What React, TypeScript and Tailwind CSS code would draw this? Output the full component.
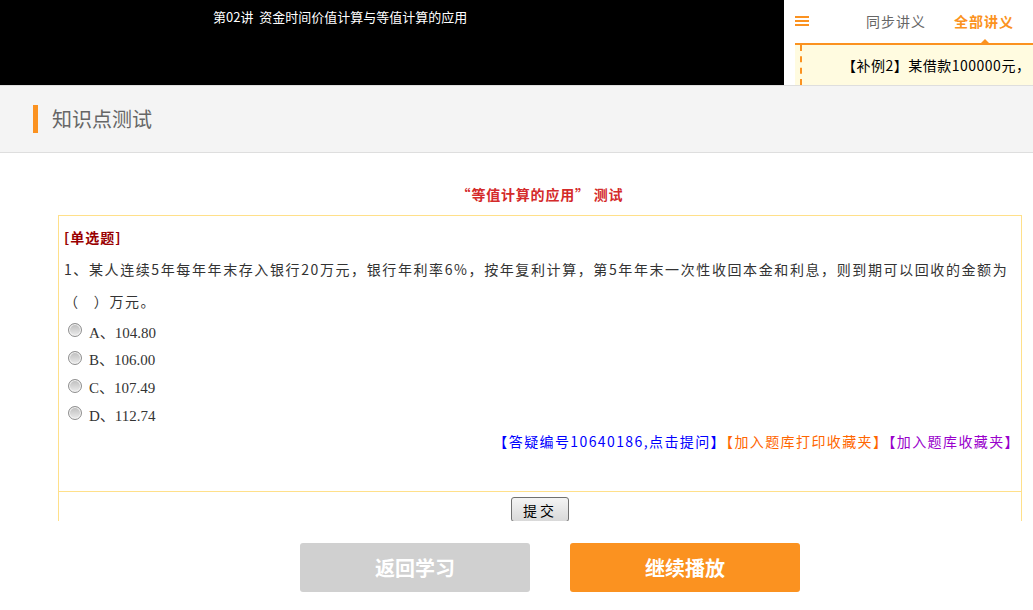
import React from 'react';

const sans = "font-['Microsoft_YaHei','Noto_Sans_CJK_SC',sans-serif]";

const options = [
  { key: 'A', value: '104.80' },
  { key: 'B', value: '106.00' },
  { key: 'C', value: '107.49' },
  { key: 'D', value: '112.74' },
];

function Radio() {
  return (
    <span className="inline-block w-[14px] h-[14px] rounded-full border border-[#8f8f8f] bg-gradient-to-b from-[#bdbdbd] to-[#ececec] shadow-[inset_0_0_0_1px_#f4f4f4]" />
  );
}

export default function App() {
  return (
    <div className={`w-[1033px] h-[610px] overflow-hidden bg-white flex flex-col ${sans}`}>
      {/* Video bar + outline panel */}
      <div className="h-[85px] flex shrink-0">
        <div className="w-[784px] shrink-0 bg-black pl-[213px] pt-[8px] text-[13px] leading-[17px] text-white">
          第02讲&nbsp;&nbsp;资金时间价值计算与等值计算的应用
        </div>
        <div className="flex-1 min-w-0 bg-white pl-[11px] flex flex-col">
          <div className="h-[45px] shrink-0 flex items-center border-b-2 border-[#fb9220] relative">
            <div className="flex flex-col gap-[2px] w-[14px] -mt-[1px]">
              <span className="h-[2px] bg-[#fb9220]" />
              <span className="h-[2px] bg-[#fb9220]" />
              <span className="h-[2px] bg-[#fb9220]" />
            </div>
            <span className="ml-[57px] text-[14px] text-[#666] tracking-[1px]">同步讲义</span>
            <span className="ml-[28px] text-[14px] font-bold text-[#fb9220] tracking-[1px]">全部讲义</span>
            <span className="absolute left-[186px] bottom-0 w-0 h-0 border-x-[4px] border-x-transparent border-b-[4px] border-b-[#fb9220]" />
          </div>
          <div className="flex-1 bg-[#fffbe0] flex items-center overflow-hidden">
            <span className="ml-[5px] h-full shrink-0 border-l-2 border-dashed border-[#fb9220]" />
            <span className="ml-[40px] whitespace-nowrap text-[14px] text-black tracking-[0.5px]">【补例2】某借款100000元，</span>
          </div>
        </div>
      </div>

      {/* Section header */}
      <div className="h-[68px] shrink-0 bg-[#f4f4f4] border-t border-b border-[#dedede] flex items-center pl-[33px]">
        <span className="w-[5px] h-[28px] bg-[#fb9220]" />
        <span className="ml-[14px] text-[20px] text-[#666]">知识点测试</span>
      </div>

      {/* Test content */}
      <div className="h-[368px] shrink-0 overflow-hidden pt-[31px]">
        <div className="ml-[58px] mr-[11px]">
          <div className="text-center text-[14px] leading-[20px] font-bold text-[#d42a2a] mb-[11px] tracking-[0.8px]">“等值计算的应用” 测试</div>
          <div className="border border-[#ffe08a]">
            <div className="pl-[5px] pr-[1px] pt-[11px] h-[275px]">
              <div className="text-[14px] leading-[20px] font-bold text-[#990000] tracking-[1px]">[单选题]</div>
              <div className="mt-[6px] text-[14px] leading-[32px] text-[#333] tracking-[1.6px]">
                1、某人连续5年每年年末存入银行20万元，银行年利率6%，按年复利计算，第5年年末一次性收回本金和利息，则到期可以回收的金额为<br />（&nbsp;&nbsp;&nbsp;）万元。
              </div>
              <div className="mt-[2px] flex flex-col">
                {options.map(o => (
                  <label key={o.key} className="h-[27.7px] flex items-center pl-[4px]">
                    <span className="-mt-[5px]"><Radio /></span>
                    <span className="ml-[7px] text-[15px] text-[#333] font-['Liberation_Serif','Noto_Sans_CJK_SC',serif]">{o.key}、{o.value}</span>
                  </label>
                ))}
              </div>
              <div className="mt-[1px] text-right text-[14px] leading-[20px] whitespace-nowrap tracking-[1.4px]">
                <span className="text-[#0000ff]">【答疑编号10640186,点击提问】</span>
                <span className="text-[#ff6600]">【加入题库打印收藏夹】</span>
                <span className="text-[#9900cc]">【加入题库收藏夹】</span>
              </div>
            </div>
            <div className="border-t border-[#ffe08a] pt-[5px] h-[80px] flex justify-center">
              <button className="h-[25px] w-[58px] rounded-[3px] border border-[#707070] bg-gradient-to-b from-[#f4f4f4] to-[#d9d9d9] text-[14px] leading-[20px] text-black tracking-[3px]">提交</button>
            </div>
          </div>
        </div>
      </div>

      {/* Bottom actions */}
      <div className="flex-1 bg-white flex pl-[300px] pt-[22px] gap-[40px]">
        <button className="w-[230px] h-[49px] rounded-[3px] bg-[#d0d0d0] text-white text-[20px] font-bold">返回学习</button>
        <button className="w-[230px] h-[49px] rounded-[3px] bg-[#fb9220] text-white text-[20px] font-bold">继续播放</button>
      </div>
    </div>
  );
}
